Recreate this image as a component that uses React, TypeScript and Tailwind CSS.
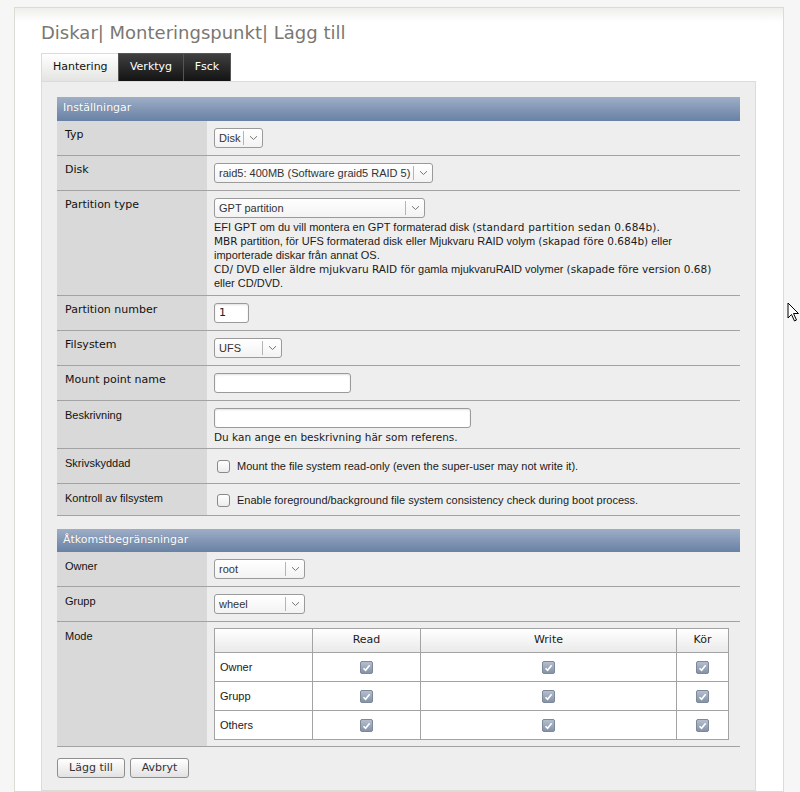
import React from 'react';

const dv = "font-['DejaVu_Sans',sans-serif]";
const lb = "font-['Liberation_Sans',Arial,sans-serif]";

function Select({ value, width }: { value: string; width: string }) {
  return (
    <div
      className={`flex h-[20px] ${width} items-stretch rounded-[3px] border border-[#9a9a9a] bg-gradient-to-b from-white to-[#f3f3f3] text-[11px] text-[#333] ${lb}`}
    >
      <span className="flex flex-1 items-center truncate pl-[4px]">{value}</span>
      <span className="my-[2px] w-px bg-[#b5b5b5]" />
      <span className="flex w-[18px] items-center justify-center">
        <svg width="9" height="6" viewBox="0 0 9 6">
          <path d="M1 1.2 L4.5 4.5 L8 1.2" fill="none" stroke="#777" strokeWidth="1" />
        </svg>
      </span>
    </div>
  );
}

function TextInput({ width, value }: { width: string; value?: string }) {
  return (
    <div
      className={`flex h-[20px] ${width} items-center rounded-[3px] border border-[#9a9a9a] bg-white pl-[4px] text-[11px] text-[#222] shadow-[inset_0_1px_2px_rgba(0,0,0,0.12)] ${dv}`}
    >
      {value}
    </div>
  );
}

function Checkbox() {
  return (
    <span className="inline-block h-[13px] w-[13px] shrink-0 rounded-[3px] border border-[#8a8a8a] bg-gradient-to-b from-white to-[#ececec]" />
  );
}

function CheckedBox() {
  return (
    <span className="inline-flex h-[13px] w-[13px] items-center justify-center rounded-[2px] border border-[#7d8899] bg-gradient-to-b from-[#b4bfcd] to-[#8593a8]">
      <svg width="9" height="8" viewBox="0 0 9 8">
        <path d="M1.5 4.2 L3.6 6.3 L7.6 1.3" fill="none" stroke="#fff" strokeWidth="1.6" />
      </svg>
    </span>
  );
}

function Row({
  label,
  labelFont = dv,
  children,
  className = 'py-[7px]',
}: {
  label: string;
  labelFont?: string;
  children: React.ReactNode;
  className?: string;
}) {
  return (
    <div className="flex border-b border-[#a3a3a3]">
      <div className={`w-[150px] shrink-0 bg-[#d9d9d9] pl-[8px] pt-[7px] text-[11px] leading-[14px] text-[#111] ${labelFont}`}>
        {label}
      </div>
      <div className={`flex-1 pl-[7px] ${className}`}>{children}</div>
    </div>
  );
}

function SectionHeader({ title, height = 'h-[24px]' }: { title: string; height?: string }) {
  return (
    <div
      className={`flex ${height} items-center border-b border-[#6a82a4] bg-gradient-to-b from-[#9eaec6] to-[#6b83a6] pl-[6px] text-[11px] text-white [text-shadow:0_0_1px_rgba(0,0,0,0.2)] ${dv}`}
    >
      {title}
    </div>
  );
}

const modeRows = ['Owner', 'Grupp', 'Others'];

export default function App() {
  return (
    <div className="relative min-h-[792px] overflow-hidden bg-[#f6f6f6] pt-[7px]">
      {/* Card */}
      <div className="ml-[14px] w-[770px] border border-[#dcdcd4] bg-[linear-gradient(to_bottom,#eeeeeb_0px,#ffffff_14px)] pl-[26px] pr-[27px] pt-[13px]">
        <h1 className={`h-[24px] text-[18px] leading-[24px] text-[#7a7772] ${dv}`}>
          Diskar| Monteringspunkt| Lägg till
        </h1>

        {/* Tabs */}
        <div className={`mt-[8px] flex text-[11px] ${dv}`}>
          <div className="flex h-[28px] w-[77px] items-center border-l border-t border-[#dcdcd4] bg-gradient-to-b from-white to-[#e4e4e2] pl-[11px] text-[#111]">
            Hantering
          </div>
          <div className="flex h-[28px] w-[66px] items-center justify-center border border-b-0 border-[#555] bg-gradient-to-b from-[#404040] to-[#141414] text-white">
            Verktyg
          </div>
          <div className="flex h-[28px] w-[47px] items-center justify-center border border-b-0 border-l-0 border-[#555] bg-gradient-to-b from-[#404040] to-[#141414] text-white">
            Fsck
          </div>
        </div>

        {/* Panel */}
        <div className="border border-[#dcdcd4] bg-[#eeeeee] px-[15px] pb-[12px] pt-[15px]">
          <SectionHeader title="Inställningar" />
          <Row label="Typ">
            <Select value="Disk" width="w-[49px]" />
          </Row>
          <Row label="Disk">
            <Select value="raid5: 400MB (Software graid5 RAID 5)" width="w-[219px]" />
          </Row>
          <Row label="Partition type" className="pb-[5px] pt-[7px]">
            <Select value="GPT partition" width="w-[211px]" />
            <div className={`mt-[2px] whitespace-nowrap text-[11px] leading-[14px] text-[#1a1a1a] ${lb}`}>
              EFI GPT om du vill montera en GPT formaterad disk{' '}
              <span className={`${dv} text-[10.5px] tracking-[0.2px]`}>(standard partition sedan 0.684b).</span>
              <br />
              <span className={`${dv} text-[10.5px]`}>MBR</span> partition, för UFS formaterad disk eller Mjukvaru RAID volym{' '}
              <span className={`${dv} text-[10.5px]`}>(skapad före 0.684b)</span> eller
              <br />
              importerade diskar från annat OS.
              <br />
              <span className={`${dv} text-[10.5px]`}>CD/ DVD eller äldre mjukvaru RAID för</span> gamla mjukvaruRAID volymer{' '}
              <span className={`${dv} text-[10.5px]`}>(skapade före version 0.68)</span>
              <br />
              eller CD/DVD.
            </div>
          </Row>
          <Row label="Partition number">
            <TextInput width="w-[35px]" value="1" />
          </Row>
          <Row label="Filsystem">
            <Select value="UFS" width="w-[68px]" />
          </Row>
          <Row label="Mount point name">
            <TextInput width="w-[137px]" />
          </Row>
          <Row label="Beskrivning" labelFont={lb} className="pb-[3px] pt-[7px]">
            <TextInput width="w-[257px]" />
            <div className={`mt-[2px] text-[10.5px] leading-[15px] text-[#1a1a1a] ${dv}`}>
              Du kan ange en beskrivning här som referens.
            </div>
          </Row>
          <Row label="Skrivskyddad" labelFont={lb} className="pb-[10px] pt-[11px]">
            <label className={`flex items-center gap-[7px] pl-[3px] text-[11px] leading-[13px] text-[#1a1a1a] ${lb}`}>
              <Checkbox />
              Mount the file system read-only (even the super-user may not write it).
            </label>
          </Row>
          <Row label="Kontroll av filsystem" labelFont={lb} className="pb-[8px] pt-[10px]">
            <label className={`flex items-center gap-[7px] pl-[3px] text-[11px] leading-[13px] text-[#1a1a1a] ${lb}`}>
              <Checkbox />
              Enable foreground/background file system consistency check during boot process.
            </label>
          </Row>

          <div className="h-[13px]" />
          <SectionHeader title="Åtkomstbegränsningar" height="h-[23px]" />
          <Row label="Owner" labelFont={lb}>
            <Select value="root" width="w-[91px]" />
          </Row>
          <Row label="Grupp" labelFont={lb}>
            <Select value="wheel" width="w-[91px]" />
          </Row>
          <Row label="Mode" labelFont={lb} className="py-[6px] pl-[6px]">
            <table className="w-[515px] border-collapse border border-[#a3a3a3] bg-white text-[11px] text-[#1a1a1a]">
              <thead>
                <tr className={`h-[24px] bg-gradient-to-b from-white to-[#e9e9e9] ${dv}`}>
                  <th className="w-[98px] border border-[#a3a3a3] font-normal" />
                  <th className="w-[108px] border border-[#a3a3a3] font-normal">Read</th>
                  <th className="w-[256px] border border-[#a3a3a3] font-normal">Write</th>
                  <th className="border border-[#a3a3a3] font-normal">Kör</th>
                </tr>
              </thead>
              <tbody className={lb}>
                {modeRows.map((r) => (
                  <tr key={r} className="h-[29px]">
                    <td className="border border-[#a3a3a3] pl-[5px]">{r}</td>
                    <td className="border border-[#a3a3a3] text-center align-middle">
                      <span className="inline-flex pt-[3px]"><CheckedBox /></span>
                    </td>
                    <td className="border border-[#a3a3a3] text-center align-middle">
                      <span className="inline-flex pt-[3px]"><CheckedBox /></span>
                    </td>
                    <td className="border border-[#a3a3a3] text-center align-middle">
                      <span className="inline-flex pt-[3px]"><CheckedBox /></span>
                    </td>
                  </tr>
                ))}
              </tbody>
            </table>
          </Row>

          <div className={`mt-[11px] flex gap-[5px] text-[11px] text-[#333] ${dv}`}>
            <button className="h-[20px] w-[68px] rounded-[3px] border border-[#8e8e8e] bg-gradient-to-b from-white to-[#e2e2e2]">
              Lägg till
            </button>
            <button className="h-[20px] w-[59px] rounded-[3px] border border-[#8e8e8e] bg-gradient-to-b from-white to-[#e2e2e2]">
              Avbryt
            </button>
          </div>
        </div>
      </div>

      {/* mouse pointer */}
      <svg className="absolute left-[787px] top-[302px]" width="13" height="21" viewBox="0 0 13 21">
        <path d="M1 1 L1 16 L4.5 12.5 L7.5 19 L9.5 18 L6.5 11.5 L11.5 11.5 Z" fill="#fff" stroke="#000" strokeWidth="1" />
      </svg>
    </div>
  );
}
